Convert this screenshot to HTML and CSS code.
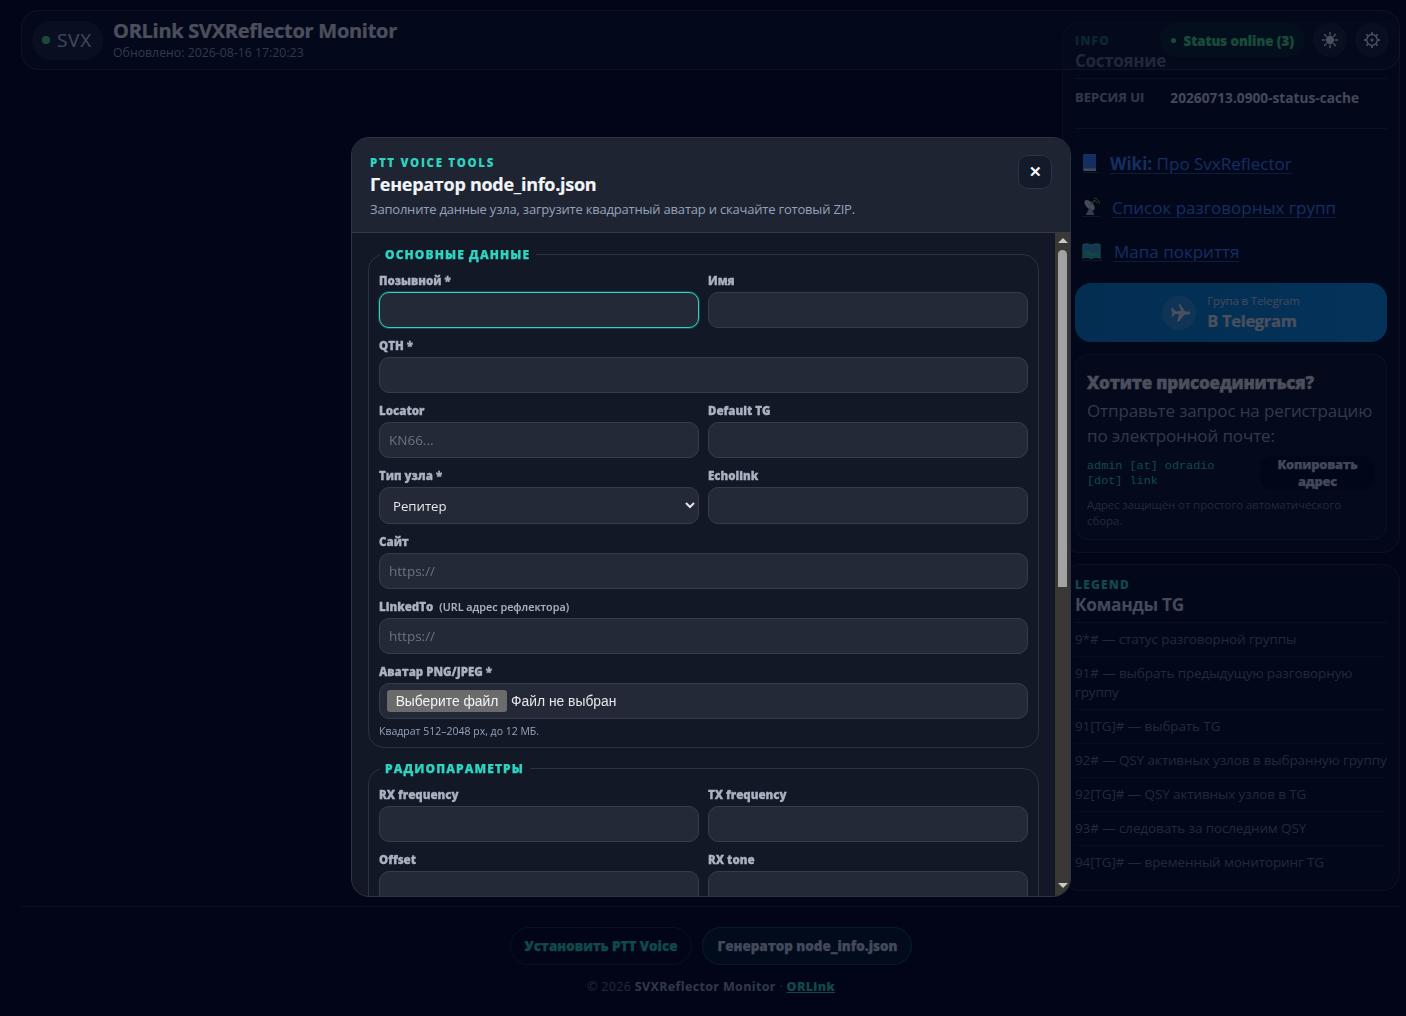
FILE: index.html
```html
<!DOCTYPE html>
<html lang="ru">
<head>
<meta charset="utf-8">
<title>ORLink SVXReflector Monitor</title>
<link rel="stylesheet" href="styles.css">
</head>
<body>
<div class="page">
  <header class="topbar">
    <div class="brand">
      <div class="logo-pill"><span class="logo-dot"></span><span class="logo-text">SVX</span></div>
      <div class="brand-text">
        <h1 class="brand-title">ORLink SVXReflector Monitor</h1>
        <div class="brand-sub">Обновлено: 2026-08-16 17:20:23</div>
      </div>
    </div>
    <div class="top-actions">
      <div class="status-pill"><span class="status-dot"></span><span class="status-text">Status online (3)</span></div>
      <button class="round-btn" type="button" aria-label="Тема">
        <svg viewBox="0 0 20 20" width="18" height="18"><circle cx="10" cy="10" r="4.6" fill="currentColor"/><g stroke="currentColor" stroke-width="1.6" stroke-linecap="round"><path d="M10 1.5v2.6M10 15.9v2.6M1.5 10h2.6M15.9 10h2.6M4 4l1.8 1.8M14.2 14.2l1.8 1.8M4 16l1.8-1.8M14.2 5.8L16 4"/></g></svg>
      </button>
      <button class="round-btn" type="button" aria-label="Настройки">
        <svg viewBox="0 0 20 20" width="18" height="18"><circle cx="10" cy="10" r="6" fill="none" stroke="currentColor" stroke-width="1.7"/><circle cx="10" cy="10" r="1.7" fill="currentColor"/><g stroke="currentColor" stroke-width="2" stroke-linecap="round"><path d="M10 2v1.4M10 16.6V18M2 10h1.4M16.6 10H18M4.4 4.4l1 1M14.6 14.6l1 1M4.4 15.6l1-1M14.6 5.4l1-1"/></g></svg>
      </button>
    </div>
  </header>

  <main class="layout">
    <div class="content"></div>
    <aside class="sidebar">
      <section class="card">
        <div class="eyebrow">INFO</div>
        <h2 class="card-title">Состояние</h2>
        <div class="version-row"><span class="version-key">ВЕРСИЯ UI</span><span class="version-val">20260713.0900-status-cache</span></div>
        <nav class="links">
          <a class="side-link" href="#"><span class="link-icon link-icon-wide">
            <svg viewBox="0 0 16 20" width="15" height="19"><path d="M1 2.5A1.5 1.5 0 0 1 2.5 1H15v15H2.5A1.5 1.5 0 0 0 1 17.5z" fill="#3b82f6"/><path d="M1 17.5A1.5 1.5 0 0 1 2.5 16H15v3H2.5A1.5 1.5 0 0 1 1 17.5z" fill="#cbd5e1"/></svg>
          </span><span class="link-text"><b>Wiki:</b> Про SvxReflector</span></a>
          <a class="side-link" href="#"><span class="link-icon">
            <svg viewBox="0 0 20 20" width="19" height="19"><ellipse cx="8" cy="8.500" rx="3.600" ry="6.800" transform="rotate(-45 8 8.500)" fill="#d4d7dc"/><path d="M8 8.500l5-4.500" stroke="#a5aab2" stroke-width="1.200"/><path d="M7.500 11.500L4 19h9l-2.500-6z" fill="#aeb2b9"/><path d="M12.500 1c3 .3 5.500 2.700 6 6M12.500 3.500c1.700.2 3.200 1.500 3.600 3.300" fill="none" stroke="#84cc16" stroke-width="1"/></svg>
          </span><span class="link-text">Список разговорных групп</span></a>
          <a class="side-link" href="#"><span class="link-icon link-icon-wide">
            <svg viewBox="0 0 20 20" width="19" height="19"><path d="M1 4c3-1.500 6-1.500 9 .5 3-2 6-2 9-.5v14c-3-1.500-6-1.500-9 .5-3-2-6-2-9-.5z" fill="#3b9fd6" stroke="#4ade80" stroke-width="1.200"/><path d="M3 11c2-1.500 4 1 5 0l2 2c3-1.500 5 .5 7-.5v3.500c-3-1.200-5-1.200-7 .5-2-1.700-4-1.700-7-.5z" fill="#34d399"/></svg>
          </span><span class="link-text">Мапа покриття</span></a>
        </nav>
        <a class="tg-btn" href="#">
          <span class="tg-circle">
            <svg viewBox="0 0 24 24" width="22" height="22"><path d="M2 13.200l1.200-1.200 5.300.7L12.300 8.800 5.500 4.600l1.700-1.100 9 3.100 3.300-2.600c1-.7 2.500-.5 2.800.1.300.7-.4 2-1.200 2.700l-3.200 2.600-.2 9.700-1.600 1.400-3.400-7.700-3.700 3.300.3 3-1.200 1-1.700-3.400-.1 0z" transform="rotate(38 12 12)" fill="currentColor"/></svg>
          </span>
          <span class="tg-text"><span class="tg-small">Група в Telegram</span><span class="tg-big">В Telegram</span></span>
        </a>
        <div class="join">
          <h3 class="join-title">Хотите присоединиться?</h3>
          <p class="join-text">Отправьте запрос на регистрацию по электронной почте:</p>
          <div class="join-row">
            <code class="join-mail">admin [at] odradio [dot] link</code>
            <button class="copy-btn" type="button">Копировать адрес</button>
          </div>
          <p class="join-note">Адрес защищён от простого автоматического сбора.</p>
        </div>
      </section>

      <section class="card card-legend">
        <div class="eyebrow">LEGEND</div>
        <h2 class="card-title card-title-legend">Команды TG</h2>
        <ul class="cmd-list">
          <li class="cmd">9*# — статус разговорной группы</li>
          <li class="cmd">91# — выбрать предыдущую разговорную группу</li>
          <li class="cmd">91[TG]# — выбрать TG</li>
          <li class="cmd">92# — QSY активных узлов в выбранную группу</li>
          <li class="cmd">92[TG]# — QSY активных узлов в TG</li>
          <li class="cmd">93# — следовать за последним QSY</li>
          <li class="cmd">94[TG]# — временный мониторинг TG</li>
        </ul>
      </section>
    </aside>
  </main>

  <footer class="footer">
    <div class="footer-btns">
      <a class="foot-btn" href="#">Установить PTT Voice</a>
      <a class="foot-btn foot-btn-alt" href="#">Генератор node_info.json</a>
    </div>
    <div class="copyright">© 2026 <b>SVXReflector Monitor</b> · <a class="copy-link" href="#">ORLink</a></div>
  </footer>
</div>

<div class="overlay">
  <div class="modal" role="dialog" aria-modal="true">
    <div class="modal-head">
      <div class="modal-eyebrow">PTT VOICE TOOLS</div>
      <h2 class="modal-title">Генератор node_info.json</h2>
      <p class="modal-desc">Заполните данные узла, загрузите квадратный аватар и скачайте готовый ZIP.</p>
      <button class="modal-close" type="button" aria-label="Закрыть">✕</button>
    </div>
    <div class="modal-main">
      <form class="modal-body">
        <fieldset class="group">
          <legend class="group-legend">Основные данные</legend>
          <div class="fields">
            <label class="field"><span class="field-label">Позывной *</span><input class="input input-focus" type="text"></label>
            <label class="field"><span class="field-label">Имя</span><input class="input" type="text"></label>
            <label class="field field-wide"><span class="field-label">QTH *</span><input class="input" type="text"></label>
            <label class="field"><span class="field-label">Locator</span><input class="input" type="text" placeholder="KN66..."></label>
            <label class="field"><span class="field-label">Default TG</span><input class="input" type="text"></label>
            <label class="field"><span class="field-label">Тип узла *</span><select class="input select"><option>Репитер</option><option>Линк</option></select></label>
            <label class="field"><span class="field-label">Echolink</span><input class="input input-tall" type="text"></label>
            <label class="field field-wide"><span class="field-label">Сайт</span><input class="input" type="text" placeholder="https://"></label>
            <label class="field field-wide"><span class="field-label">LinkedTo <span class="field-note">(URL адрес рефлектора)</span></span><input class="input" type="text" placeholder="https://"></label>
            <div class="field field-wide">
              <span class="field-label">Аватар PNG/JPEG *</span>
              <div class="file-box"><button class="file-btn" type="button">Выберите файл</button><span class="file-name">Файл не выбран</span></div>
              <span class="field-hint">Квадрат 512–2048 px, до 12 МБ.</span>
            </div>
          </div>
        </fieldset>
        <fieldset class="group">
          <legend class="group-legend">Радиопараметры</legend>
          <div class="fields">
            <label class="field"><span class="field-label">RX frequency</span><input class="input" type="text"></label>
            <label class="field"><span class="field-label">TX frequency</span><input class="input" type="text"></label>
            <label class="field"><span class="field-label">Offset</span><input class="input" type="text"></label>
            <label class="field"><span class="field-label">RX tone</span><input class="input" type="text"></label>
          </div>
        </fieldset>
      </form>
      <div class="rail" aria-hidden="true">
        <span class="rail-btn"><svg viewBox="0 0 10 5" width="10" height="5"><path d="M5 0l5 5H0z" fill="#c8c8c8"/></svg></span>
        <span class="rail-track"><span class="rail-thumb"></span></span>
        <span class="rail-btn rail-btn-down"><svg viewBox="0 0 10 5" width="10" height="5"><path d="M0 0h10L5 5z" fill="#c8c8c8"/></svg></span>
        <svg class="rail-grip" viewBox="0 0 8 8" width="8" height="8"><path d="M7.500 .5l-7 7M7.500 4.500l-3 3" stroke="#bdbdbd" stroke-width="1"/></svg>
      </div>
    </div>
  </div>
</div>
</body>
</html>
```
FILE: styles.css
```css
* { box-sizing: border-box; }
html, body { margin: 0; height: 100%; overflow: hidden; }
body {
  background: #020617;
  color: #e5e7eb;
  font-family: "Open Sans", "Noto Sans", sans-serif;
  color-scheme: dark;
}
h1, h2, h3, p, ul { margin: 0; padding: 0; }

.page { position: relative; height: 1016px; padding: 22px 6px 0 20px; }

.topbar {
  position: absolute; left: 21px; right: 6px; top: 10px; height: 60px;
  display: flex; align-items: center; justify-content: space-between;
  padding: 0 10px 0 10px;
  border: 1px solid rgba(148, 163, 184, .2);
  border-radius: 18px;
  background: rgba(15, 23, 42, .55);
}
.brand { display: flex; align-items: center; gap: 10px; }
.logo-pill {
  display: flex; align-items: center; gap: 7px;
  width: 71px; height: 39px; padding-left: 10px;
  border-radius: 20px; background: rgba(51, 65, 85, .42);
}
.logo-dot { width: 8px; height: 8px; border-radius: 50%; background: #4ade80; }
.logo-text { font-size: 19px; letter-spacing: .7px; color: #cbd5e1; }
.brand-text { margin-top: -2px; }
.brand-title { font-size: 20px; line-height: 25px; font-weight: 700; letter-spacing: -.28px; color: #e5e7eb; -webkit-text-stroke: .2px; }
.brand-sub { margin-top: 2px; font-size: 12.300px; line-height: 16px; color: #94a3b8; }
.top-actions { display: flex; align-items: center; gap: 8px; }
.status-pill {
  display: flex; align-items: center; gap: 8px;
  height: 34px; padding: 0 11px;
  border-radius: 17px; background: rgba(34, 197, 94, .1);
  font-size: 13.200px; font-weight: 800; color: #4ade80; -webkit-text-stroke: .2px;
}
.status-text { padding-top: 2px; }
.status-dot { width: 5px; height: 5px; border-radius: 50%; background: #4ade80; }
.round-btn {
  display: flex; align-items: center; justify-content: center;
  width: 34px; height: 34px; padding: 0; border: 0; border-radius: 50%;
  background: rgba(51, 65, 85, .4); color: #e2e8f0;
}

.layout { display: grid; grid-template-columns: 1fr 338px; column-gap: 4px; }
.sidebar { display: flex; flex-direction: column; gap: 11px; }
.card {
  padding: 10px 12px 12px;
  border: 1px solid rgba(148, 163, 184, .16);
  border-radius: 18px;
  background: rgba(15, 23, 42, .3);
}
.card-legend { padding: 12px 12px 11px; }
.eyebrow { font-size: 12px; line-height: 16px; font-weight: 800; letter-spacing: 1.2px; color: #2dd4bf; }
.card-title { font-size: 17px; line-height: 23px; font-weight: 700; letter-spacing: -.3px; color: #cbd5e1; padding-bottom: 6px; border-bottom: 1px solid rgba(148, 163, 184, .16); }
.card-title-legend { font-size: 17.300px; line-height: 23px; padding-bottom: 6px; }
.version-row {
  display: flex; align-items: center; gap: 26px;
  height: 50px; padding-bottom: 13px;
  border-bottom: 1px solid rgba(148, 163, 184, .16);
}
.version-key { font-size: 13px; font-weight: 700; color: #94a3b8; -webkit-text-stroke: .15px; }
.version-val { font-size: 13.700px; font-weight: 700; color: #cbd5e1; }
.links { display: flex; flex-direction: column; gap: 18px; padding: 21px 0 19px; }
.side-link { display: flex; align-items: center; height: 26px; padding-left: 7px; gap: 11px; color: #3b82f6; font-size: 17px; text-decoration: none; }
.link-icon { display: flex; border-bottom: 1px solid rgba(59, 130, 246, .4); }
.link-icon-wide { padding-right: 2px; }
.link-text { text-decoration: underline; text-decoration-color: rgba(59, 130, 246, .55); text-decoration-thickness: 1px; text-underline-offset: 3px; }
.tg-btn {
  display: flex; align-items: center; justify-content: center; gap: 11px;
  height: 59px; border-radius: 16px;
  background: linear-gradient(90deg, #0b80cc, #0b90e2);
  color: #e5e7eb; text-decoration: none;
}
.tg-circle { display: flex; align-items: center; justify-content: center; width: 34px; height: 34px; border-radius: 50%; background: rgba(255, 255, 255, .14); }
.tg-text { display: flex; flex-direction: column; }
.tg-small { font-size: 11.500px; line-height: 16px; color: #cbd5e1; letter-spacing: -.15px; }
.tg-big { font-size: 16.500px; line-height: 24px; font-weight: 700; letter-spacing: -.3px; -webkit-text-stroke: .2px; }
.join {
  margin-top: 12px; height: 186px; padding: 17px 11px 0;
  border: 1px solid rgba(148, 163, 184, .14);
  border-radius: 14px;
  background: rgba(30, 41, 59, .28);
}
.join-title { font-size: 17px; line-height: 22px; font-weight: 800; letter-spacing: -.2px; color: #e5e7eb; -webkit-text-stroke: .35px; }
.join-text { margin-top: 4px; font-size: 17px; line-height: 25px; letter-spacing: -.12px; color: #94a3b8; }
.join-row { display: flex; align-items: center; justify-content: space-between; margin-top: 8px; }
.join-mail { width: 150px; font-family: "Liberation Mono", monospace; font-size: 11.800px; line-height: 15px; color: #2dd4bf; }
.copy-btn {
  width: 115px; height: 34px; margin-bottom: 2px; padding: 0 8px; border: 0; border-radius: 12px;
  background: rgba(2, 6, 23, .85);
  font-family: inherit; font-size: 12.800px; line-height: 17px; font-weight: 800; letter-spacing: -.2px; color: #cbd5e1; -webkit-text-stroke: .25px;
}
.join-note { margin-top: 5px; font-size: 11.500px; line-height: 16px; letter-spacing: -.1px; color: #64748b; }
.cmd-list { list-style: none; }
.cmd { padding: 7px 0; font-size: 13.500px; line-height: 19px; letter-spacing: -.12px; color: #64748b; border-bottom: 1px solid rgba(148, 163, 184, .1); }
.cmd:last-child { border-bottom: 0; }

.footer { margin-top: 15px; padding-top: 20px; border-top: 1px solid rgba(148, 163, 184, .16); text-align: center; }
.footer-btns { display: flex; justify-content: center; gap: 10px; padding-left: 2px; }
.foot-btn {
  display: flex; align-items: center; height: 38px; padding: 0 14px;
  border: 1px solid rgba(148, 163, 184, .18); border-radius: 19px;
  font-size: 13.400px; font-weight: 800; color: #2dd4bf; text-decoration: none; -webkit-text-stroke: .25px;
}
.foot-btn-alt { color: #cbd5e1; background: rgba(45, 212, 191, .08); border-color: rgba(45, 212, 191, .3); }
.copyright { margin-top: 13px; padding-left: 2px; font-size: 12.500px; line-height: 18px; letter-spacing: .35px; color: #64748b; }
.copyright b { color: #94a3b8; }
.copy-link { font-weight: 800; color: #2dd4bf; }

.overlay {
  position: fixed; inset: 0;
  display: flex; justify-content: center; align-items: flex-start;
  padding: 137px 0 0 16px;
  background: rgba(2, 6, 23, .68);
}
.modal {
  display: flex; flex-direction: column;
  width: 720px; height: 760px; overflow: hidden;
  border: 1px solid #2d3344; border-radius: 18px;
  background: #131826;
}
.modal-head { position: relative; flex: none; height: 95px; padding: 17px 18px 0; background: #1f2433; border-bottom: 1px solid #343a4a; }
.modal-eyebrow { font-size: 11.500px; line-height: 16px; font-weight: 800; letter-spacing: 1.65px; color: #2dd4bf; }
.modal-title { margin-top: 1px; font-size: 18px; line-height: 25px; font-weight: 700; letter-spacing: -.28px; color: #f1f5f9; -webkit-text-stroke: .15px; }
.modal-desc { margin-top: 3px; font-size: 13px; line-height: 18px; letter-spacing: -.2px; color: #94a3b8; }
.modal-close {
  position: absolute; right: 18px; top: 17px;
  width: 34px; height: 34px; padding: 0;
  border: 1px solid #2c3345; border-radius: 10px;
  background: #131a2a; color: #f8fafc; font-size: 15px; font-weight: 800;
}
.modal-main { flex: 1; min-height: 0; display: flex; }
.modal-body { flex: 1; min-width: 0; overflow: hidden; padding: 12px 16px 0; }
.rail { position: relative; flex: none; width: 15px; display: flex; flex-direction: column; background: #3a3835; }
.rail-btn { flex: none; display: flex; justify-content: center; height: 17px; padding-top: 5px; }
.rail-btn-down { padding-top: 0; height: 13px; }
.rail-track { flex: 1; display: flex; justify-content: center; }
.rail-thumb { width: 9px; height: 337px; border-radius: 5px 5px 0 0; background: #a3a3a3; }
.rail-grip { position: absolute; right: 0; bottom: 1px; }

.group { margin: 0 0 11px; padding: 0 10px 8px; min-width: 0; border: 1px solid #2b3142; border-radius: 16px; }
.group-legend { margin-left: 1px; padding: 2px 6px 0 5px; font-size: 12px; line-height: 16px; font-weight: 800; letter-spacing: 1.1px; text-transform: uppercase; color: #2dd4bf; -webkit-text-stroke: .25px; }
.fields { display: grid; grid-template-columns: 1fr 1fr; column-gap: 9px; row-gap: 11px; margin-top: 11px; }
.field { display: flex; flex-direction: column; gap: 4px; min-width: 0; }
.field-wide { grid-column: 1 / -1; }
.field-label { font-size: 11.500px; line-height: 14px; font-weight: 800; color: #aab2c2; -webkit-text-stroke: .3px; }
.field-note { margin-left: 3px; font-size: 10.800px; font-weight: 600; -webkit-text-stroke: .1px; }
.input {
  width: 100%; height: 36px; padding: 0 9px;
  border: 1px solid #363c4d; border-radius: 10px;
  background: #232937; color: #e5e7eb; outline: 0;
  font-family: inherit; font-size: 13.500px;
}
.input::placeholder { color: #6b7280; }
.input-focus { border-color: #2dd4bf; box-shadow: 0 0 0 1px rgba(45, 212, 191, .25); }
.input-tall, .select { height: 37px; }
.select { padding-left: 9px; font-size: 13.200px; }
.file-box { display: flex; align-items: center; gap: 4px; height: 36px; padding: 0 7px 1px; border: 1px solid #363c4d; border-radius: 10px; background: #232937; }
.file-btn { height: 22px; width: 120px; padding: 0; border: 0; border-radius: 3px; background: #6b6b6b; color: #f3f4f6; font-family: "Liberation Sans", sans-serif; font-size: 13.850px; }
.file-name { font-family: "Liberation Sans", sans-serif; font-size: 13.850px; color: #e5e7eb; }
.field-hint { margin-top: 1px; font-size: 10.500px; line-height: 15px; color: #94a3b8; }
```
